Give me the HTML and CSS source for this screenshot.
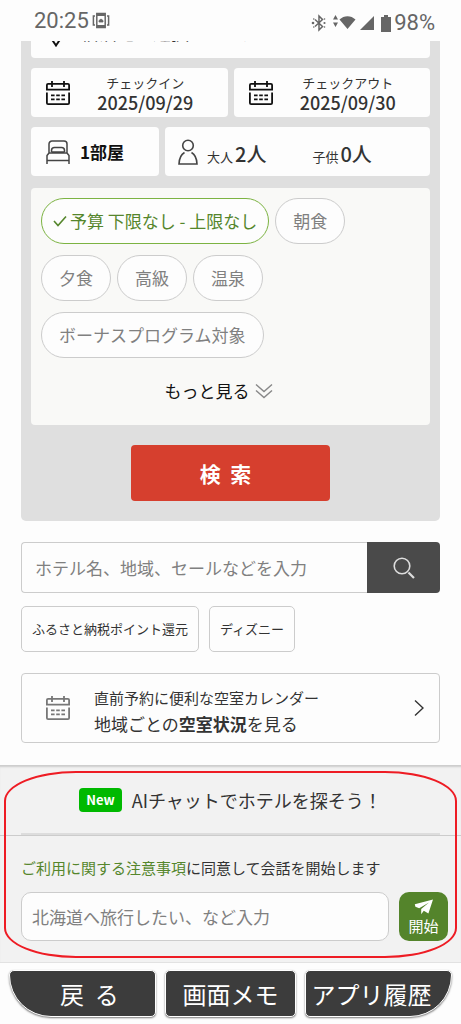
FILE: index.html
```html
<!DOCTYPE html>
<html lang="ja">
<head>
<meta charset="utf-8">
<meta name="viewport" content="width=device-width, initial-scale=1">
<title>ホテル検索</title>
<link rel="stylesheet" href="styles.css">
</head>
<body>
<svg class="defs" aria-hidden="true">
  <symbol id="calendar" viewBox="0 0 26 26">
    <g fill="none" stroke="currentColor" stroke-width="1.8">
      <path d="M1.9 9.6V5a1.2 1.2 0 0 1 1.2-1.2h19.8A1.2 1.2 0 0 1 24.100 5v4.600z"/>
      <path d="M7 1v6M19 1v6"/>
      <path d="M1.900 12.400V23a1.200 1.200 0 0 0 1.200 1.200h19.800a1.200 1.200 0 0 0 1.200-1.200V12.400"/>
      <path d="M6 15.300h3.600M11.200 15.300h3.600M16.400 15.300H20M6 19.300h3.600M11.200 19.300h3.600M16.400 19.300H20"/>
    </g>
  </symbol>
</svg>

<header class="status">
  <span class="status-time">20:25</span>
  <svg class="status-vibrate" viewBox="0 0 18 18" width="18" height="18" fill="none" stroke="#666" stroke-width="1.500" aria-hidden="true">
    <rect x="4.800" y="1.500" width="8.400" height="14"/><path d="M5 3h8M5 14h8" stroke-width="2"/><path d="M3 4H1.400v9H3M15 4h1.600v9H15"/><path d="M7 10V8.500l2-1.500 2 1.500V10z" fill="#666" stroke-width=".8"/>
  </svg>
  <span class="status-right">
    <svg viewBox="0 0 16 18" width="16" height="18" aria-hidden="true"><path d="M4 5.500l7.500 7L8 16V2l3.500 3.500-7.500 7" fill="none" stroke="#666" stroke-width="1.500"/><g fill="#666"><circle cx="2" cy="9" r="1.300"/><circle cx="13.500" cy="9" r="1.100"/><circle cx="2.800" cy="5" r=".8"/><circle cx="2.800" cy="13" r=".8"/><circle cx="13.500" cy="5" r=".8"/><circle cx="13.500" cy="13" r=".8"/></g></svg>
    <svg class="status-wifi" viewBox="0 0 24 18" width="24" height="18" fill="#666" aria-hidden="true"><path d="M3.500 1L6 5.500H1zM3.500 13L1 8.500h5zM7.500 5.500C12 1 19 1 23.500 5.500L15.500 15z"/></svg>
    <svg class="status-signal" viewBox="0 0 14 14" width="14" height="14" fill="#666" aria-hidden="true"><path d="M14 0v14H0z"/></svg>
    <svg class="status-battery" viewBox="0 0 10 17" width="10" height="17" fill="#666" aria-hidden="true"><path d="M3 0h4v2h3v15H0V2h3z"/></svg>
    <span class="status-percent">98%</span>
  </span>
</header>

<main>
  <form class="panel">
    <div class="destination-clip">
      <button type="button" class="card destination">
        <svg viewBox="0 0 18 26" width="18" height="26" aria-hidden="true"><path d="M9 24.500C5 18.500 1.500 14.500 1.500 9a7.500 7.500 0 0 1 15 0c0 5.500-3.500 9.500-7.500 15.500z" fill="none" stroke="#111" stroke-width="2"/><circle cx="9" cy="9" r="3" fill="none" stroke="#111" stroke-width="2"/></svg>
        <span class="destination-text">宿泊地を選択してください</span>
      </button>
    </div>
    <div class="dates">
      <button type="button" class="card date">
        <svg class="calendar" aria-hidden="true"><use href="#calendar"/></svg>
        <span class="date-text"><span class="date-label">チェックイン</span><span class="date-value">2025/09/29</span></span>
      </button>
      <button type="button" class="card date">
        <svg class="calendar" aria-hidden="true"><use href="#calendar"/></svg>
        <span class="date-text"><span class="date-label">チェックアウト</span><span class="date-value">2025/09/30</span></span>
      </button>
    </div>
    <div class="guests">
      <button type="button" class="card rooms">
        <svg viewBox="0 0 24 24" width="24" height="24" fill="none" stroke="#444" stroke-width="1.500" aria-hidden="true"><path d="M3 13V4a3 3 0 0 1 3-3h12a3 3 0 0 1 3 3v9M5.500 12V10.500a3 3 0 0 1 3-3h7a3 3 0 0 1 3 3V12M5.500 12h13M1 24v-8.500L3 13h18l2 2.500V24M1 20.500h22" stroke-linejoin="round"/></svg>
        <span>1部屋</span>
      </button>
      <button type="button" class="card people">
        <svg viewBox="0 0 20 26" width="20" height="26" fill="none" stroke="#444" stroke-width="1.600" aria-hidden="true"><circle cx="10" cy="6.500" r="5.300"/><path d="M6.500 13.500C3 15.500 1.200 19.500 1 25h18c-.2-5.500-2-9.500-5.500-11.500"/></svg>
        <span class="count"><small>大人</small><b>2人</b></span>
        <span class="count children"><small>子供</small><b>0人</b></span>
      </button>
    </div>
    <div class="filters">
      <div class="chips">
        <button type="button" class="chip selected"><svg viewBox="0 0 14 12" width="14" height="12" aria-hidden="true"><path d="M1 6l4 4.500L13 1.500" fill="none" stroke="currentColor" stroke-width="1.600"/></svg>予算 下限なし - 上限なし</button>
        <button type="button" class="chip">朝食</button>
        <button type="button" class="chip">夕食</button>
        <button type="button" class="chip">高級</button>
        <button type="button" class="chip">温泉</button>
        <button type="button" class="chip">ボーナスプログラム対象</button>
      </div>
      <button type="button" class="more">もっと見る<svg viewBox="0 0 18 16" width="18" height="16" fill="none" stroke="#888" stroke-width="1.400" aria-hidden="true"><path d="M1 1.500l8 7 8-7M1 7.500l8 7 8-7"/></svg></button>
    </div>
    <button type="submit" class="submit">検&nbsp;&nbsp;索</button>
  </form>

  <form class="keyword">
    <input type="text" placeholder="ホテル名、地域、セールなどを入力" aria-label="ホテル名、地域、セールなどを入力">
    <button type="submit" aria-label="検索"><svg viewBox="0 0 22 22" width="22" height="22" fill="none" stroke="#ddd" stroke-width="1.600" aria-hidden="true"><circle cx="9" cy="9" r="7.800"/><path d="M15.500 15.500l5.500 5.500" stroke-width="2.200"/></svg></button>
  </form>

  <nav class="tags">
    <a href="#furusato">ふるさと納税ポイント還元</a>
    <a href="#disney">ディズニー</a>
  </nav>

  <a class="vacancy" href="#vacancy">
    <svg class="calendar" aria-hidden="true"><use href="#calendar"/></svg>
    <span class="vacancy-text"><span class="vacancy-lead">直前予約に便利な空室カレンダー</span><span>地域ごとの<b>空室状況</b>を見る</span></span>
    <svg viewBox="0 0 10 18" width="10" height="18" fill="none" stroke="#333" stroke-width="1.400" aria-hidden="true"><path d="M1 1.500L9 9l-8 7.500"/></svg>
  </a>
</main>

<section class="chat">
  <h2><span class="new">New</span>AIチャットでホテルを探そう！</h2>
  <form class="chat-body">
    <p><a href="#terms">ご利用に関する注意事項</a>に同意して会話を開始します</p>
    <div class="chat-row">
      <input type="text" placeholder="北海道へ旅行したい、など入力" aria-label="北海道へ旅行したい、など入力">
      <button type="submit"><svg viewBox="0 0 20 16" width="20" height="16" fill="#fff" aria-hidden="true"><path d="M19 .5L.8 5.200l.6 2.600 3.800 1.400L15 3.600 7.200 10v5.200l2.600-3.500 4.600 2.800z"/></svg>開始</button>
    </div>
  </form>
  <div class="highlight"></div>
</section>

<nav class="app-nav">
  <button type="button" class="back">戻&nbsp;&nbsp;る</button>
  <button type="button" class="memo">画面メモ</button>
  <button type="button" class="history">アプリ履歴</button>
</nav>
</body>
</html>
```
FILE: styles.css
```css
* { box-sizing: border-box; }

body {
  margin: 0;
  background: #fdfdfd;
  color: #333;
  font-family: "Noto Sans CJK JP", sans-serif;
  font-size: 17px;
  line-height: 24px;
}

button, input {
  margin: 0;
  padding: 0;
  border: 0;
  font: inherit;
  color: inherit;
}

a { color: inherit; text-decoration: none; }
svg { flex: none; }
.defs { display: none; }
.calendar { width: 26px; height: 26px; }

.status {
  display: flex;
  align-items: center;
  height: 41px;
  padding: 0 26px 0 34px;
  color: #666;
  font-family: Roboto, sans-serif;
  font-size: 22px;
}
.status-vibrate { margin-left: 3px; }
.status-right {
  display: flex;
  align-items: center;
  margin-left: auto;
  padding-top: 5px;
}
.status-wifi { margin-left: 5px; }
.status-signal { margin-left: 4px; }
.status-battery { margin-left: 7px; }
.status-percent { margin-left: 3px; }

main { padding: 0 21px 22px; }

.panel {
  padding: 0 10px 20px;
  background: #dfdfdf;
  border-radius: 0 0 5px 5px;
}

.card {
  display: flex;
  align-items: center;
  height: 49px;
  background: #fdfdfd;
  border-radius: 4px;
}

.destination-clip {
  display: flex;
  align-items: flex-end;
  height: 17px;
  overflow: hidden;
}
.destination { width: 100%; padding-left: 16px; gap: 16px; }
.destination-text { padding-bottom: 4px; font-size: 18px; }

.dates { display: flex; gap: 6px; margin-top: 10px; }
.date { flex: 1; padding: 0 14px; color: #111; }
.date-text {
  display: flex;
  flex: 1;
  flex-direction: column;
  align-items: center;
  padding-left: 6px;
  color: #333;
}
.date-label { font-size: 13px; line-height: 18px; }
.date-value { font-size: 18px; font-weight: 500; line-height: 20px; }

.guests {
  display: grid;
  grid-template-columns: 128fr 265fr;
  gap: 6px;
  margin-top: 10px;
}
.rooms {
  gap: 10px;
  padding-left: 15px;
  color: #111;
  font-weight: 700;
}
.people { padding-left: 13px; }
.count { display: flex; align-items: baseline; gap: 2px; margin-left: 9px; padding-top: 8px; }
.count small { font-size: 13px; }
.count b { font-size: 20px; font-weight: 500; }
.children { margin-left: 46px; }

.filters {
  margin-top: 12px;
  padding: 10px 10px 22px;
  background: #f9f9f7;
  border-radius: 4px;
}
.chips { display: flex; flex-wrap: wrap; gap: 11px 6px; }
.chip {
  display: flex;
  align-items: center;
  height: 46px;
  padding: 0 17px;
  background: #fdfdfd;
  border: 1px solid #ccc;
  border-radius: 24px;
  color: #808080;
}
.selected { gap: 3px; padding: 0 11px; border-color: #7cb342; color: #55862c; }
.more {
  display: flex;
  align-items: center;
  justify-content: center;
  gap: 5px;
  width: 100%;
  margin-top: 21px;
  padding-right: 24px;
  background: none;
  color: #111;
}

.submit {
  display: block;
  width: 50%;
  height: 56px;
  margin: 20px auto 0;
  padding-right: 10px;
  background: #d63f2e;
  border-radius: 4px;
  color: #fff;
  font-size: 21px;
  font-weight: 700;
}

.keyword { display: flex; height: 51px; margin-top: 21px; }
.keyword input {
  flex: 1;
  min-width: 0;
  padding-left: 13px;
  background: #fdfdfd;
  border: 1px solid #ccc;
  border-right: 0;
  border-radius: 4px 0 0 4px;
}
input::placeholder { color: #808080; opacity: 1; }
.keyword button {
  display: grid;
  place-items: center;
  width: 73px;
  background: #4a4a4a;
  border-radius: 0 4px 4px 0;
}

.tags { display: flex; gap: 10px; margin-top: 13px; }
.tags a {
  padding: 10px;
  border: 1px solid #ccc;
  border-radius: 5px;
  font-size: 13px;
}

.vacancy {
  display: flex;
  align-items: center;
  height: 70px;
  margin-top: 21px;
  padding: 0 15px 0 23px;
  border: 1px solid #ccc;
  border-radius: 4px;
}
.vacancy .calendar { color: #777; }
.vacancy-text { display: flex; flex: 1; flex-direction: column; padding: 6px 0 0 23px; line-height: 26px; }
.vacancy-lead { font-size: 15px; }

.chat {
  position: relative;
  background: #f2f2f2;
  border-bottom: 1px solid #e2e2e2;
  box-shadow: inset 0 3px 2px -1px #ccc;
}
.chat h2 {
  display: flex;
  align-items: center;
  justify-content: center;
  gap: 10px;
  height: 71px;
  margin: 0;
  background: linear-gradient(#ddd, #ddd) bottom / calc(100% - 42px) 2px no-repeat;
  border-bottom: 1px solid #ccc;
  font-size: 18px;
  font-weight: 400;
}
.new {
  padding: 0 7px;
  background: #00b900;
  border-radius: 4px;
  color: #fff;
  font-size: 13px;
  font-weight: 700;
}
.chat-body { padding: 20px 13px 21px 21px; }
.chat-body p { margin: 0; font-size: 15px; }
.chat-body a { color: #55862c; }
.chat-row { display: flex; align-items: center; gap: 10px; margin-top: 12px; }
.chat-row input {
  flex: 1;
  min-width: 0;
  height: 49px;
  padding-left: 10px;
  background: #fdfdfd;
  border: 1px solid #ccc;
  border-radius: 10px;
}
.chat-row button {
  display: flex;
  flex-direction: column;
  align-items: center;
  justify-content: center;
  width: 49px;
  height: 49px;
  padding-top: 2px;
  background: #54842b;
  border-radius: 10px;
  color: #fff;
  font-size: 15px;
  line-height: 22px;
}
.highlight {
  position: absolute;
  inset: 6px 4px 4px;
  border: 2px solid #ee1c24;
  border-radius: 72px / 30px;
  pointer-events: none;
}

.app-nav {
  display: grid;
  grid-template-columns: 147fr 131fr 147fr;
  gap: 9px;
  padding: 7px 9px;
}
.app-nav button {
  height: 47px;
  background: #3c3c3c;
  border: 1px solid #fff;
  border-radius: 5px;
  box-shadow: 0 1px 2px #777;
  color: #fff;
  font-size: 24px;
  white-space: nowrap;
}
.app-nav .back { padding-left: 14px; border-bottom-left-radius: 42px; }
.app-nav .history { padding-right: 14px; border-bottom-right-radius: 42px; }
```
